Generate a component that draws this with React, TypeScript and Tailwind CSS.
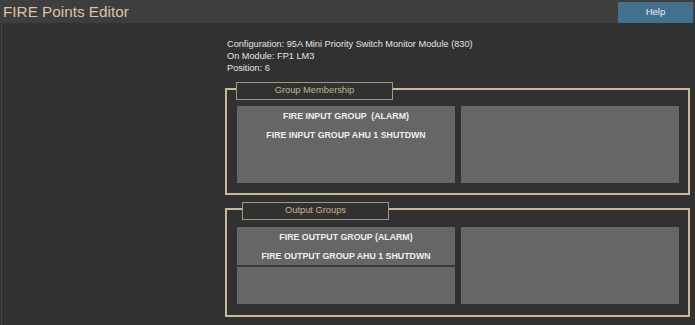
import React from "react";

const font = { fontFamily: '"Liberation Sans", Arial, sans-serif' };

function GroupBox({
  title,
  legendLeft,
  legendWidth,
  children,
  className,
}: {
  title: string;
  legendLeft: string;
  legendWidth: string;
  children: React.ReactNode;
  className?: string;
}) {
  return (
    <div className={`relative border-2 border-[#c9b994] ${className ?? ""}`}>
      <div
        className={`absolute top-[-8px] ${legendLeft} ${legendWidth} h-[18px] border border-[#a4967a] bg-[#313131] flex items-center justify-center text-[9.3px] text-[#cdb28a]`}
      >
        {title}
      </div>
      {children}
    </div>
  );
}

export default function App() {
  return (
    <div className="w-[695px] h-[325px] bg-[#313131] overflow-hidden" style={font}>
      <div className="h-[23px] bg-[#3e3e3e] flex items-center justify-between">
        <div className="pl-[3px] text-[15.3px] leading-none text-[#d9c5a3]">FIRE Points Editor</div>
        <div className="mr-[2px] mt-[1px] w-[75px] h-[21px] bg-[#44708f] flex items-center justify-center text-[9.5px] text-[#e8eef2]">
          Help
        </div>
      </div>
      <div className="flex">
        <div className="w-[225px] h-[302px] shrink-0">
          <div className="ml-[1px] w-[1px] h-full bg-[#454545]" />
        </div>
        <div className="w-[465px] pt-[15px]">
          <div className="pl-[2px] text-[9.2px] leading-[12px] text-[#e4e4e4]">
            <div>Configuration: 95A Mini Priority Switch Monitor Module (830)</div>
            <div>On Module: FP1 LM3</div>
            <div>Position: 6</div>
          </div>
          <GroupBox
            title="Group Membership"
            legendLeft="left-[9px]"
            legendWidth="w-[157px]"
            className="mt-[14px] h-[107px] pt-[16px] pl-[10px]"
          >
            <div className="flex gap-[6px]">
              <div className="w-[218px] h-[77px] bg-[#666666] pt-[4px] text-center text-[8.8px] font-bold text-[#efefef]">
                <div className="h-[12px] leading-[12px] whitespace-pre">FIRE INPUT GROUP  (ALARM)</div>
                <div className="mt-[7px] h-[12px] leading-[12px]">FIRE INPUT GROUP AHU 1 SHUTDWN</div>
              </div>
              <div className="w-[218px] h-[77px] bg-[#666666]" />
            </div>
          </GroupBox>
          <GroupBox
            title="Output Groups"
            legendLeft="left-[15px]"
            legendWidth="w-[147px]"
            className="mt-[13px] h-[109px] pt-[17px] pl-[10px]"
          >
            <div className="flex gap-[6px]">
              <div className="w-[218px] h-[77px] bg-[#666666] flex flex-col text-center text-[8.8px] font-bold text-[#efefef]">
                <div className="h-[38px] pt-[4px]">
                  <div className="h-[12px] leading-[12px]">FIRE OUTPUT GROUP (ALARM)</div>
                  <div className="mt-[7px] h-[12px] leading-[12px]">FIRE OUTPUT GROUP AHU 1 SHUTDWN</div>
                </div>
                <div className="h-[2px] bg-[#3a3a3a]" />
                <div className="flex-1" />
              </div>
              <div className="w-[218px] h-[77px] bg-[#666666]" />
            </div>
          </GroupBox>
        </div>
      </div>
    </div>
  );
}
